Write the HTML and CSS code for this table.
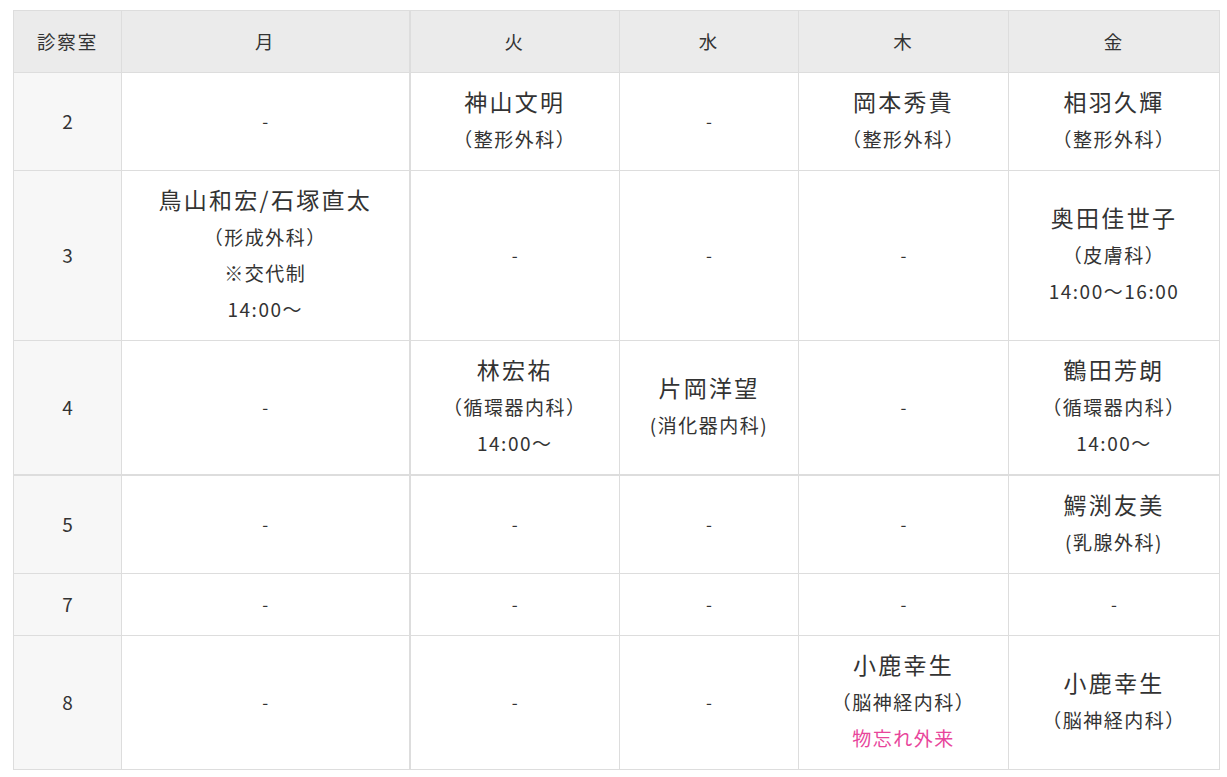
FILE: index.html
```html
<!DOCTYPE html>
<html lang="ja">
<head>
<meta charset="utf-8">
<title>診察室 スケジュール</title>
<link rel="stylesheet" href="styles.css">
</head>
<body>
<div class="wrap">
<table class="sched">
  <colgroup>
    <col class="c-room"><col class="c-mon"><col class="c-tue"><col class="c-wed"><col class="c-thu"><col class="c-fri">
  </colgroup>
  <thead>
    <tr>
      <th class="room-h">診察室</th><th>月</th><th>火</th><th>水</th><th>木</th><th>金</th>
    </tr>
  </thead>
  <tbody>
    <tr>
      <td class="room">2</td>
      <td><span class="dash">-</span></td>
      <td><span class="name">神山文明</span><span class="dept">（整形外科）</span></td>
      <td><span class="dash">-</span></td>
      <td><span class="name">岡本秀貴</span><span class="dept">（整形外科）</span></td>
      <td><span class="name">相羽久輝</span><span class="dept">（整形外科）</span></td>
    </tr>
    <tr>
      <td class="room">3</td>
      <td><span class="name">鳥山和宏/石塚直太</span><span class="dept">（形成外科）</span><span class="dept">※交代制</span><span class="dept">14:00～</span></td>
      <td><span class="dash">-</span></td>
      <td><span class="dash">-</span></td>
      <td><span class="dash">-</span></td>
      <td><span class="name">奥田佳世子</span><span class="dept">（皮膚科）</span><span class="dept">14:00～16:00</span></td>
    </tr>
    <tr class="thick-bottom">
      <td class="room">4</td>
      <td><span class="dash">-</span></td>
      <td><span class="name">林宏祐</span><span class="dept">（循環器内科）</span><span class="dept">14:00～</span></td>
      <td><span class="name">片岡洋望</span><span class="dept">(消化器内科)</span></td>
      <td><span class="dash">-</span></td>
      <td><span class="name">鶴田芳朗</span><span class="dept">（循環器内科）</span><span class="dept">14:00～</span></td>
    </tr>
    <tr>
      <td class="room">5</td>
      <td><span class="dash">-</span></td>
      <td><span class="dash">-</span></td>
      <td><span class="dash">-</span></td>
      <td><span class="dash">-</span></td>
      <td><span class="name">鰐渕友美</span><span class="dept">(乳腺外科)</span></td>
    </tr>
    <tr>
      <td class="room">7</td>
      <td><span class="dash">-</span></td>
      <td><span class="dash">-</span></td>
      <td><span class="dash">-</span></td>
      <td><span class="dash">-</span></td>
      <td><span class="dash">-</span></td>
    </tr>
    <tr>
      <td class="room">8</td>
      <td><span class="dash">-</span></td>
      <td><span class="dash">-</span></td>
      <td><span class="dash">-</span></td>
      <td><span class="name">小鹿幸生</span><span class="dept">（脳神経内科）</span><span class="dept pink">物忘れ外来</span></td>
      <td><span class="name">小鹿幸生</span><span class="dept">（脳神経内科）</span></td>
    </tr>
  </tbody>
</table>
</div>
</body>
</html>
```

FILE: styles.css
```css
html, body {
  margin: 0;
  padding: 0;
  background: #ffffff;
}
body {
  font-family: "Noto Sans CJK JP", "Noto Sans", sans-serif;
  color: #333333;
}
.wrap {
  padding: 10px 8px 0 13px;
}
.sched {
  width: 1206px;
  border-collapse: collapse;
  table-layout: fixed;
}
.c-room { width: 108px; }
.c-mon { width: 288px; }
.c-tue { width: 210px; }
.c-wed { width: 179px; }
.c-thu { width: 210px; }
.c-fri { width: 211px; }

.sched th,
.sched td {
  border: 1px solid #dddddd;
  text-align: center;
  vertical-align: middle;
  padding: 12px 4px 13px;
  line-height: 36px;
}
.sched th {
  background: #ebebeb;
  font-weight: normal;
  font-size: 18.5px;
  letter-spacing: 0.1em;
  color: #333333;
}
.sched td.room {
  background: #f7f7f7;
  font-size: 19px;
}
.sched tr > :nth-child(2) {
  border-right: 2px solid #dddddd;
}
.thick-bottom td {
  border-bottom: 2px solid #dddddd;
}
.name,
.dept,
.dash {
  display: block;
}
.name {
  font-size: 23px;
  letter-spacing: 0.1em;
  line-height: 33px;
  padding-bottom: 3px;
}
.dept {
  font-size: 19px;
  letter-spacing: 0.08em;
}
.dash {
  font-size: 17px;
}
.pink {
  color: #e8459b;
}
```
